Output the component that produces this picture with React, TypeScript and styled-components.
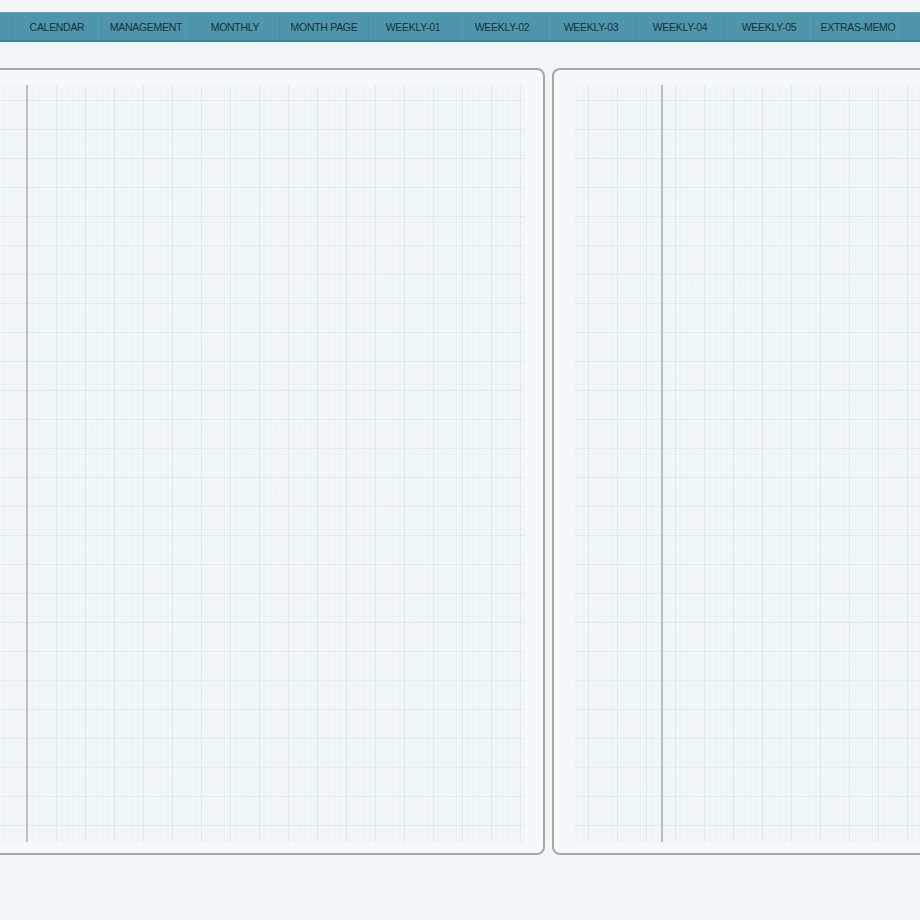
import React from 'react'
import styled, { createGlobalStyle } from 'styled-components'

const GlobalStyle = createGlobalStyle`
  html, body {
    margin: 0;
    padding: 0;
    background: #f1f7f9;
    overflow: hidden;
  }
`

const Page = styled.div`
  width: 920px;
  height: 920px;
  padding-top: 12px;
  box-sizing: border-box;
  background: #f1f7f9;
  overflow: hidden;
  font-family: 'Liberation Sans', Arial, sans-serif;
`

const TabBar = styled.nav`
  display: flex;
  height: 30px;
  background: #4f96ad;
  border-top: 1px solid #5fa3b8;
  border-bottom: 2px solid #3f8198;
  box-sizing: border-box;
`

const TabLead = styled.div`
  width: 12px;
  flex-shrink: 0;
`

const Tab = styled.div`
  width: 89px;
  flex-shrink: 0;
  display: flex;
  align-items: center;
  justify-content: center;
  border-left: 1px solid #468ca3;
  box-sizing: border-box;
  font-size: 10.5px;
  letter-spacing: -0.3px;
  color: #172f3a;
  text-transform: uppercase;
  white-space: nowrap;
`

const TabTail = styled.div`
  flex: 1;
  border-left: 1px solid #468ca3;
`

const Spread = styled.main`
  display: flex;
  gap: 7px;
  margin-top: 26px;
  margin-left: -15px;
`

const Sheet = styled.section<{ $padLeft: number; $padRight: number }>`
  width: 560px;
  height: 787px;
  flex-shrink: 0;
  box-sizing: border-box;
  border: 2px solid #a2aaa2;
  border-radius: 8px;
  background: #f4f9fb;
  padding: 15px ${({ $padRight }) => $padRight}px 11px ${({ $padLeft }) => $padLeft}px;
  display: flex;
`

const GridArea = styled.div<{ $ox: number; $oy: number }>`
  flex: 1;
  display: flex;
  background-color: #f2f8fa;
  background-image:
    linear-gradient(to right, rgba(150, 178, 190, 0.15) 1px, transparent 1px),
    linear-gradient(to bottom, rgba(150, 178, 190, 0.13) 1px, transparent 1px),
    linear-gradient(to right, rgba(170, 195, 205, 0.08) 1px, transparent 1px),
    linear-gradient(to bottom, rgba(170, 195, 205, 0.07) 1px, transparent 1px);
  background-size: 29px 29px, 29px 29px, 5.8px 5.8px, 5.8px 5.8px;
  background-position: ${({ $ox, $oy }) =>
    `${$ox}px ${$oy}px, ${$ox}px ${$oy}px, ${$ox}px ${$oy}px, ${$ox}px ${$oy}px`};
`

const Gutter = styled.div<{ $w: number }>`
  width: ${({ $w }) => $w}px;
  flex-shrink: 0;
`

const MarginRule = styled.div`
  width: 2px;
  background: #b9bfc1;
`

export default function App() {
  const tabs = [
    'Calendar',
    'Management',
    'Monthly',
    'Month Page',
    'Weekly-01',
    'Weekly-02',
    'Weekly-03',
    'Weekly-04',
    'Weekly-05',
    'Extras-Memo',
  ]
  return (
    <>
      <GlobalStyle />
      <Page>
        <TabBar>
          <TabLead />
          {tabs.map((t) => (
            <Tab key={t}>{t}</Tab>
          ))}
          <TabTail />
        </TabBar>
        <Spread>
          <Sheet $padLeft={0} $padRight={18}>
            <GridArea $ox={11} $oy={15}>
              <Gutter $w={39} />
              <MarginRule />
            </GridArea>
          </Sheet>
          <Sheet $padLeft={21} $padRight={0}>
            <GridArea $ox={13} $oy={15}>
              <Gutter $w={86} />
              <MarginRule />
            </GridArea>
          </Sheet>
        </Spread>
      </Page>
    </>
  )
}
